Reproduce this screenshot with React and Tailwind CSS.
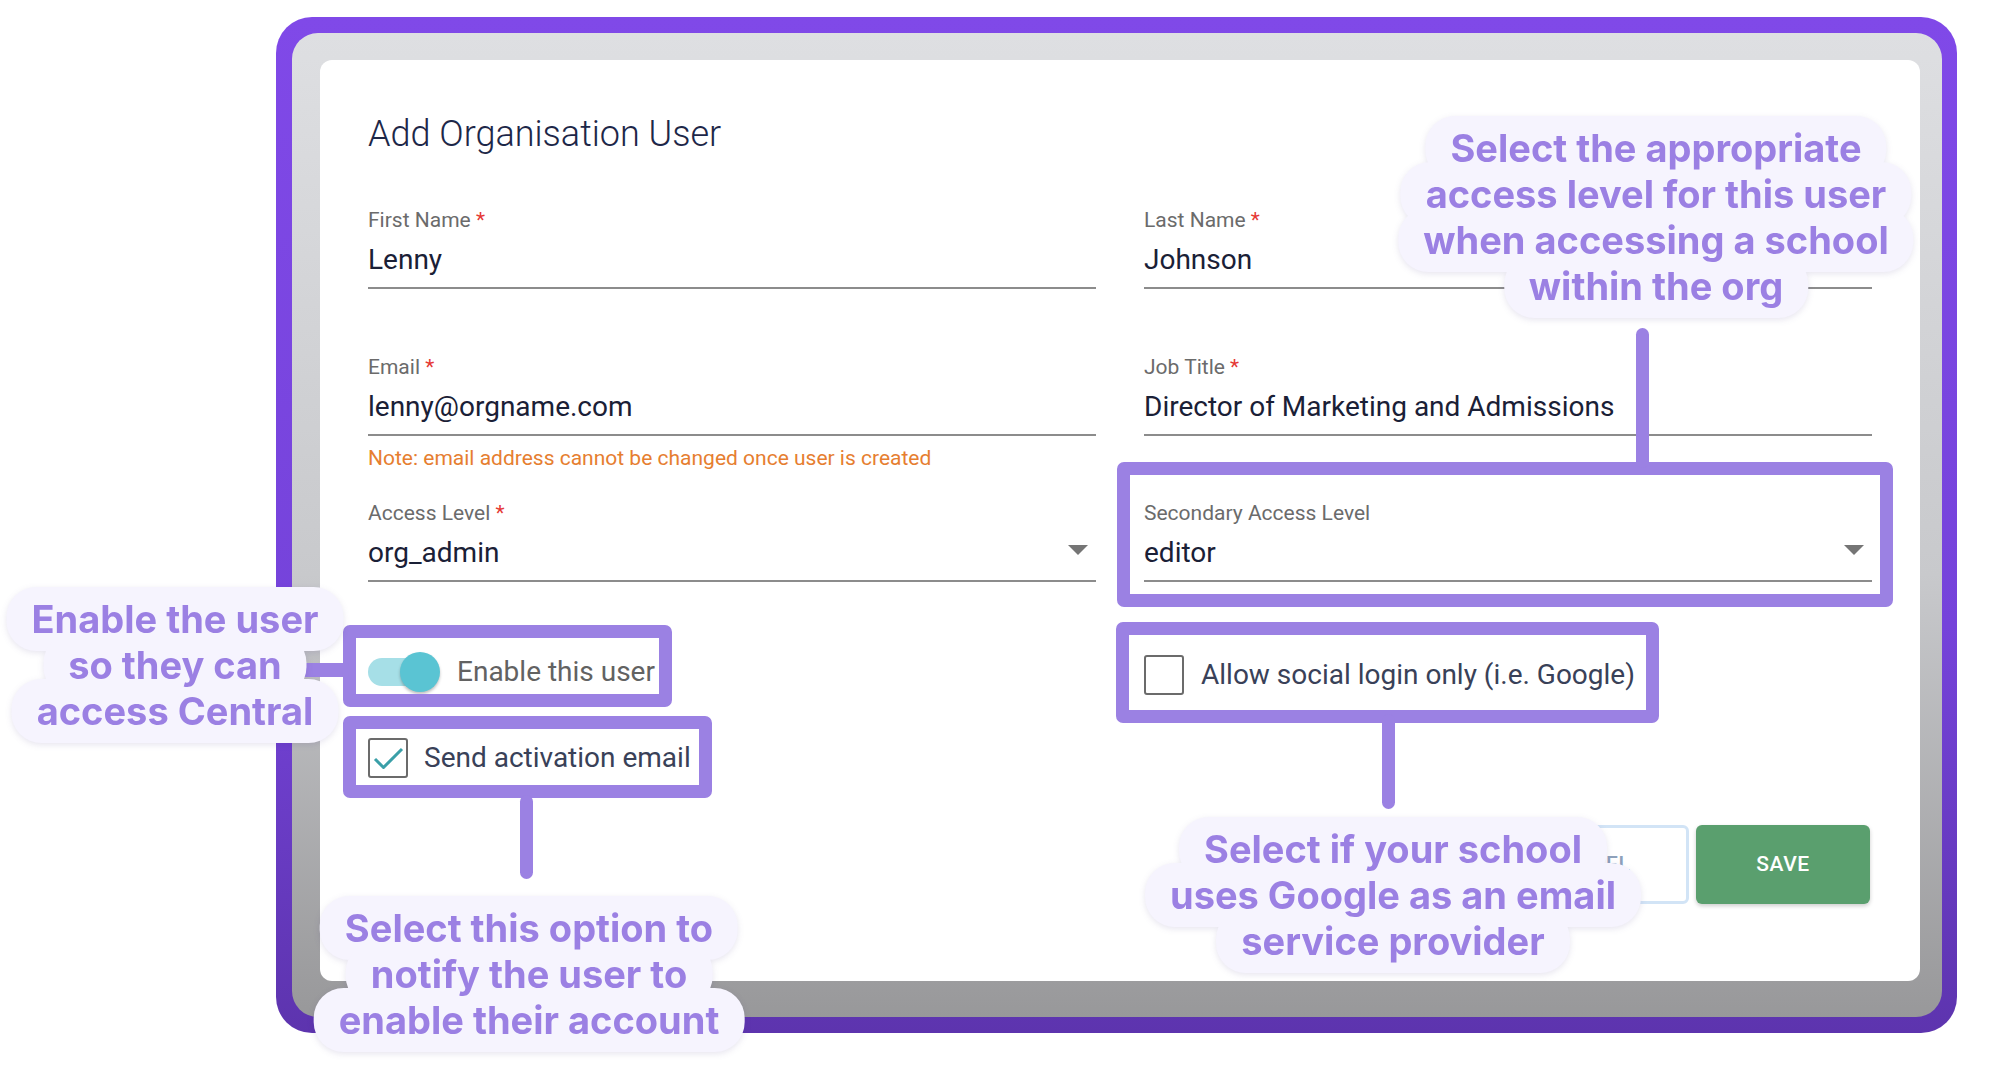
import React from "react";

const labelCls = "text-[21px] leading-[24px] text-[#6b6b6b]";

function Field({ label, required, value, select, note }) {
  return (
    <div className="h-[146.5px]">
      <div className={labelCls}>
        {label}
        {required && <span className="text-[#e53935]"> *</span>}
      </div>
      <div className="mt-[12px] flex items-center justify-between border-b-2 border-[#8c8c8c] pb-[11px]">
        <span className="text-[28px] leading-[32px] text-[#1a2036]">{value}</span>
        {select && (
          <svg width="20" height="10" viewBox="0 0 20 10" className="mr-[8px] mb-[7px]">
            <polygon points="0,0 20,0 10,10" fill="#757575" />
          </svg>
        )}
      </div>
      {note && <div className="mt-[10px] text-[21px] leading-[24px] text-[#e67e30]">{note}</div>}
    </div>
  );
}

function Checkbox({ checked }) {
  return (
    <div className="size-[40px] shrink-0 rounded-[3px] border-2 border-[#6b6b6b] bg-white">
      {checked && (
        <svg width="36" height="36" viewBox="0 0 36 36">
          <polyline points="5,19 13.5,27.5 32,9" fill="none" stroke="#3a9fa8" strokeWidth="3" strokeLinejoin="round" />
        </svg>
      )}
    </div>
  );
}

function Callout({ className, lines }) {
  return (
    <div
      className={`absolute flex -translate-x-1/2 flex-col items-center font-['Inter',sans-serif] text-[38px] leading-[46px] font-bold text-[#9b80e3] drop-shadow-[0_2px_3px_rgba(60,40,120,0.12)] ${className}`}
    >
      {lines.map((line, i) => (
        <span
          key={i}
          className={`relative whitespace-nowrap rounded-[30px] bg-[#f6f4fe] px-[25px] py-[9px] ${i > 0 ? "-mt-[18px]" : ""}`}
        >
          <span className="relative z-10">{line}</span>
        </span>
      ))}
    </div>
  );
}

export default function App() {
  return (
    <div className="relative h-[1085px] w-[1993px] overflow-hidden bg-white font-['Roboto',sans-serif]">
      {/* Framed form */}
      <div className="pl-[276px] pt-[17px]">
        <div className="h-[1016px] w-[1681px] rounded-[36px] bg-[linear-gradient(180deg,#8049e8_0%,#7543da_60%,#5d34ae_100%)] pt-[16px] pr-[15px] pb-[16px] pl-[16px]">
          <div className="h-full rounded-[26px] bg-[linear-gradient(180deg,#dedfe2_0%,#c8c9cc_55%,#98989a_100%)] pt-[27px] pr-[22px] pb-[36px] pl-[28px]">
            <div className="h-full rounded-[12px] bg-white px-[48px] pt-[53px]">
              <h2 className="text-[36px] leading-[43px] font-light text-[#1d2748]">Add Organisation User</h2>

              <div className="mt-[52px] grid grid-cols-2 gap-x-[48px]">
                {/* Left column */}
                <div className="flex flex-col">
                  <Field label="First Name" required value="Lenny" />
                  <Field
                    label="Email"
                    required
                    value="lenny@orgname.com"
                    note="Note: email address cannot be changed once user is created"
                  />
                  <Field label="Access Level" required value="org_admin" select />

                  <div className="flex h-[48px] items-center gap-[17px]">
                    <div className="relative h-[40px] w-[72px] shrink-0">
                      <div className="absolute top-[6px] left-0 h-[28px] w-[55px] rounded-full bg-[#a6dfe7]" />
                      <div className="absolute top-0 right-0 size-[40px] rounded-full bg-[#5ac4d3] shadow-[0_2px_3px_rgba(0,0,0,0.25)]" />
                    </div>
                    <span className="text-[28px] leading-[32px] text-[#626262]">Enable this user</span>
                  </div>

                  <div className="mt-[38.5px] flex h-[48px] items-center gap-[16px]">
                    <Checkbox checked />
                    <span className="text-[28px] leading-[32px] text-[#394158]">Send activation email</span>
                  </div>
                </div>

                {/* Right column */}
                <div className="flex flex-col">
                  <Field label="Last Name" required value="Johnson" />
                  <Field label="Job Title" required value="Director of Marketing and Admissions" />
                  <Field label="Secondary Access Level" value="editor" select />

                  <div className="mt-[3.5px] flex h-[48px] items-center gap-[17px]">
                    <Checkbox />
                    <span className="text-[28px] leading-[32px] text-[#394158]">Allow social login only (i.e. Google)</span>
                  </div>

                  <div className="mt-[126px] flex justify-end gap-[7px] pr-[2px]">
                    <button className="h-[79px] w-[200px] rounded-[6px] border-[3px] border-[#d2e4f6] bg-white text-[21px] font-medium tracking-wide text-[#8ea1bb]">
                      CANCEL
                    </button>
                    <button className="h-[79px] w-[174px] rounded-[6px] bg-[#5a9f6e] text-[21px] font-medium tracking-wide text-white shadow-[0_2px_4px_rgba(0,0,0,0.2)]">
                      SAVE
                    </button>
                  </div>
                </div>
              </div>
            </div>
          </div>
        </div>
      </div>

      {/* Highlight boxes */}
      <div className="absolute top-[625px] left-[343px] h-[82px] w-[329px] rounded-[7px] border-[13px] border-[#9b81e3]" />
      <div className="absolute top-[716px] left-[343px] h-[82px] w-[369px] rounded-[7px] border-[13px] border-[#9b81e3]" />
      <div className="absolute top-[462px] left-[1117px] h-[145px] w-[776px] rounded-[7px] border-[13px] border-[#9b81e3]" />
      <div className="absolute top-[622px] left-[1116px] h-[101px] w-[543px] rounded-[7px] border-[13px] border-[#9b81e3]" />

      {/* Connectors */}
      <div className="absolute top-[328px] left-[1636px] h-[140px] w-[13px] rounded-full bg-[#9b81e3]" />
      <div className="absolute top-[714px] left-[1382px] h-[95px] w-[13px] rounded-full bg-[#9b81e3]" />
      <div className="absolute top-[795px] left-[520px] h-[84px] w-[13px] rounded-full bg-[#9b81e3]" />
      <div className="absolute top-[663px] left-[303px] h-[14px] w-[46px] rounded-[3px] bg-[#9b81e3]" />

      {/* Callouts */}
      <Callout className="top-[587px] left-[175px]" lines={["Enable the user", "so they can", "access Central"]} />
      <Callout
        className="top-[116px] left-[1656px]"
        lines={["Select the appropriate", "access level for this user", "when accessing a school", "within the org"]}
      />
      <Callout
        className="top-[896px] left-[529px]"
        lines={["Select this option to", "notify the user to", "enable their account"]}
      />
      <Callout
        className="top-[817px] left-[1393px]"
        lines={["Select if your school", "uses Google as an email", "service provider"]}
      />
    </div>
  );
}
